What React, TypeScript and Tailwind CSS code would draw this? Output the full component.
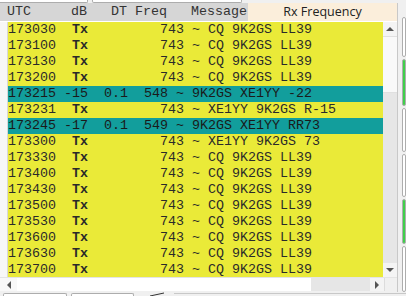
import React from "react";

type Row = { t: string; hi?: boolean };

const rows: Row[] = [
  { t: "173030  Tx         743 ~ CQ 9K2GS LL39" },
  { t: "173100  Tx         743 ~ CQ 9K2GS LL39" },
  { t: "173130  Tx         743 ~ CQ 9K2GS LL39" },
  { t: "173200  Tx         743 ~ CQ 9K2GS LL39" },
  { t: "173215 -15  0.1  548 ~ 9K2GS XE1YY -22", hi: true },
  { t: "173231  Tx         743 ~ XE1YY 9K2GS R-15" },
  { t: "173245 -17  0.1  549 ~ 9K2GS XE1YY RR73", hi: true },
  { t: "173300  Tx         743 ~ XE1YY 9K2GS 73" },
  { t: "173330  Tx         743 ~ CQ 9K2GS LL39" },
  { t: "173400  Tx         743 ~ CQ 9K2GS LL39" },
  { t: "173430  Tx         743 ~ CQ 9K2GS LL39" },
  { t: "173500  Tx         743 ~ CQ 9K2GS LL39" },
  { t: "173530  Tx         743 ~ CQ 9K2GS LL39" },
  { t: "173600  Tx         743 ~ CQ 9K2GS LL39" },
  { t: "173630  Tx         743 ~ CQ 9K2GS LL39" },
  { t: "173700  Tx         743 ~ CQ 9K2GS LL39" },
];

function Line({ r }: { r: Row }) {
  if (r.hi) {
    return (
      <div className="h-[16px] leading-[16px] bg-[#129e9c] text-[#1a1a1a] whitespace-pre">{r.t}</div>
    );
  }
  const head = r.t.slice(0, 8);
  const tx = r.t.slice(8, 10);
  const rest = r.t.slice(10);
  return (
    <div className="h-[16px] leading-[16px] bg-[#eaea38] text-[#2a2a2a] whitespace-pre">
      {head}
      <span className="font-bold">{tx}</span>
      {rest}
    </div>
  );
}

function Tri({ dir }: { dir: "up" | "down" | "left" | "right" }) {
  const pts = {
    up: "0,5 4,1 8,5",
    down: "0,1 4,5 8,1",
    left: "5,0 1,4 5,8",
    right: "1,0 5,4 1,8",
  }[dir];
  const vert = dir === "up" || dir === "down";
  return (
    <svg width={vert ? 8 : 6} height={vert ? 6 : 8} viewBox={vert ? "0 0 8 6" : "0 0 6 8"}>
      <polygon points={pts} fill="#555" />
    </svg>
  );
}

export default function App() {
  return (
    <div className="w-[406px] h-[296px] bg-[#f0f0f0] overflow-hidden flex flex-col font-['Liberation_Mono',monospace] text-[13.33px]">
      {/* top edge of buttons above */}
      <div className="h-[3px] flex gap-[4px] px-[0px]">
        <div className="w-[88px] h-[3px] bg-white border-b border-r border-[#adadad] rounded-br-[2px]" />
        <div className="w-[150px] h-[3px] bg-white border-b border-x border-[#adadad] rounded-b-[2px]" />
      </div>
      <div className="flex flex-1 min-h-0">
        {/* table widget */}
        <div className="w-[398px] flex flex-col border-r border-[#c8c8c8]">
          <div className="h-[19px] flex border-b border-white">
            <div className="w-[248px] bg-[#d6d6d6] text-[#333] whitespace-pre pl-[7px] leading-[18px]">
              {"UTC     dB   DT Freq   Message"}
            </div>
            <div className="flex-1 bg-[#fbeedb] text-[#222] font-['Open_Sans',sans-serif] text-[12.5px] leading-[18px] text-center">
              Rx Frequency
            </div>
          </div>
          <div className="flex h-[255px]">
            <div className="w-[8px] bg-[#f7f7f7] border-r border-[#d8d8d8]" />
            <div className="w-[376px] overflow-hidden pl-[-1px]">
              {rows.map((r, i) => (
                <Line key={i} r={r} />
              ))}
            </div>
            <div className="w-[14px] bg-[#e6e6e6] flex flex-col">
              <div className="h-[14px] bg-[#f4f4f4] flex items-center justify-center">
                <Tri dir="up" />
              </div>
              <div className="h-[57px] bg-[#f9f9f9] border-y border-[#e0e0e0]" />
              <div className="flex-1" />
              <div className="h-[14px] bg-[#f4f4f4] flex items-center justify-center">
                <Tri dir="down" />
              </div>
            </div>
          </div>
          <div className="flex h-[14px] border-t border-[#e4e4e4]">
            <div className="w-[17px] bg-[#f8f8f8] flex items-center justify-center">
              <Tri dir="left" />
            </div>
            <div className="w-[294px] bg-white" />
            <div className="w-[59px] bg-[#e6e6e6]" />
            <div className="w-[14px] bg-[#f4f4f4] flex items-center justify-center">
              <Tri dir="right" />
            </div>
            <div className="flex-1 bg-[#f0f0f0] border-l border-[#dcdcdc]" />
          </div>
        </div>
        {/* right side widgets (clipped) */}
        <div className="flex-1 flex flex-col gap-[2px] pl-[4px] pt-[14px]">
          <div className="h-[40px] bg-white border border-[#adadad] rounded-[3px]" />
          <div className="h-[47px] bg-[#3fcf4a] border border-[#adadad] rounded-[3px]" />
          <div className="h-[44px] bg-white border border-[#adadad] rounded-[3px]" />
          <div className="h-[43px] bg-white border border-[#adadad] rounded-[3px]" />
          <div className="h-[45px] bg-[#3fcf4a] border border-[#adadad] rounded-[3px]" />
          <div className="flex-1 bg-white border border-[#adadad] rounded-[3px]" />
        </div>
      </div>
      {/* bottom edge of buttons below */}
      <div className="h-[4px] flex gap-[4px] pl-[3px] items-end">
        <div className="w-[64px] h-[3px] bg-white border-t border-x border-[#adadad] rounded-t-[2px]" />
        <div className="w-[63px] h-[3px] bg-white border-t border-x border-[#adadad] rounded-t-[2px]" />
        <svg width="20" height="4" className="ml-[12px]">
          <line x1="0" y1="4" x2="14" y2="1" stroke="#333" strokeWidth="1" />
        </svg>
        <div className="flex-1 h-[3px] border-t border-[#c8c8c8]" />
      </div>
    </div>
  );
}
